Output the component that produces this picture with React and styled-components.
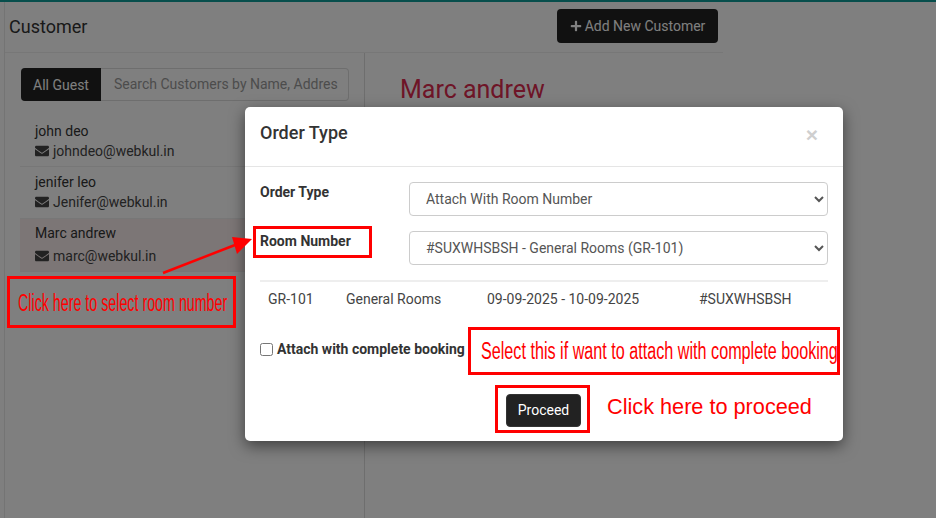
import styled, { createGlobalStyle } from 'styled-components';
import { FaEnvelope, FaPlus } from 'react-icons/fa';

const GlobalStyle = createGlobalStyle`
  html, body {
    margin: 0;
    height: 100%;
    overflow: hidden;
    background: #fff;
  }
  body, select, input, button {
    font-family: Roboto, "Liberation Sans", sans-serif;
  }
  * {
    box-sizing: border-box;
  }
`;

const Page = styled.div`
  position: relative;
  width: 936px;
  height: 518px;
  overflow: hidden;
`;

const TopLine = styled.div`
  height: 2px;
  background: #0f9c98;
`;

const Content = styled.div`
  width: 719px;
  height: 516px;
  margin-left: 4px;
  border-left: 1px solid #e8e8e8;
  display: flex;
  flex-direction: column;
`;

const TopBar = styled.header`
  height: 51px;
  flex-shrink: 0;
  border-bottom: 1px solid #eee;
  display: flex;
  align-items: center;
  justify-content: space-between;
  padding: 0 5px 0 4px;
`;

const PageTitle = styled.h1`
  margin: 0 0 2px;
  font-size: 18px;
  font-weight: 400;
  color: #333;
`;

const AddButton = styled.button`
  width: 161px;
  height: 34px;
  margin-bottom: 2px;
  border: 0;
  border-radius: 4px;
  background: #222;
  color: #fff;
  font-size: 14px;
  display: flex;
  align-items: center;
  justify-content: center;
  gap: 3px;
  padding: 0;
`;

const Columns = styled.div`
  flex: 1;
  display: flex;
  min-height: 0;
`;

const Sidebar = styled.aside`
  width: 360px;
  border-right: 1px solid #ddd;
  padding: 15px 15px 0 15px;
`;

const SearchGroup = styled.div`
  display: flex;
  height: 33px;
  margin: 0 0 16px 1px;
  border: 1px solid #ddd;
  border-left: 0;
  border-radius: 4px;
`;

const GuestButton = styled.button`
  width: 80px;
  border: 0;
  border-radius: 4px 0 0 4px;
  background: #222;
  color: #fff;
  font-size: 14px;
  padding: 0;
  margin: -1px 0;
`;

const SearchInput = styled.input`
  flex: 1;
  min-width: 0;
  border: 0;
  background: transparent;
  padding: 0 10px 2px 13px;
  font-size: 14px;
  &::placeholder {
    color: #999;
    opacity: 1;
  }
`;

const GuestRow = styled.div`
  height: ${(p) => p.$height}px;
  padding: ${(p) => p.$top}px 0 0 15px;
  border-bottom: 1px solid #eee;
  font-size: 14px;
  line-height: 20px;
  color: #333;
  background: ${(p) => (p.$active ? '#f9eded' : 'transparent')};
`;

const GuestName = styled.div``;

const GuestMail = styled.div`
  display: flex;
  align-items: center;
  gap: 4px;
  margin-top: ${(p) => p.$gap || 0}px;
  color: #444;
  svg {
    font-size: 14px;
  }
`;

const Detail = styled.main`
  flex: 1;
  padding: 20px 35px;
`;

const DetailName = styled.h2`
  margin: 0;
  font-size: 25px;
  font-weight: 400;
  line-height: 34px;
  color: #dc2a4e;
`;

const Overlay = styled.div`
  position: absolute;
  inset: 0;
  background: rgba(0, 0, 0, 0.5);
`;

const Modal = styled.section`
  position: absolute;
  left: 245px;
  top: 107px;
  width: 598px;
  height: 334px;
  background: #fff;
  border-radius: 5px;
  box-shadow: 0 5px 15px rgba(0, 0, 0, 0.5);
  display: flex;
  flex-direction: column;
`;

const ModalHeader = styled.header`
  height: 60px;
  flex-shrink: 0;
  border-bottom: 1px solid #e5e5e5;
  display: flex;
  justify-content: space-between;
  padding: 14px 25px 0 15px;
`;

const ModalTitle = styled.h3`
  margin: 0;
  font-size: 18px;
  font-weight: 500;
  line-height: 23px;
  color: #333;
`;

const CloseMark = styled.span`
  font-family: "Liberation Sans", sans-serif;
  font-size: 21px;
  font-weight: 700;
  line-height: 28px;
  color: #cfcfcf;
`;

const ModalBody = styled.div`
  flex: 1;
  padding: 15px 15px 0;
  display: flex;
  flex-direction: column;
`;

const FormRow = styled.div`
  display: flex;
  height: 34px;
  margin-bottom: 15px;
`;

const FieldLabel = styled.label`
  width: 149px;
  flex-shrink: 0;
  font-size: 14px;
  font-weight: 700;
  line-height: 20px;
  color: #333;
`;

const FieldSelect = styled.select`
  flex: 1;
  height: 34px;
  padding: 0 12px;
  border: 1px solid #ccc;
  border-radius: 4px;
  background: #fff;
  color: #555;
  font-size: 14px;
`;

const BookingRow = styled.div`
  display: grid;
  grid-template-columns: 78px 141px 212px 1fr;
  height: 45px;
  padding: 7px 8px 0;
  border-top: 2px solid #eee;
  font-size: 14px;
  line-height: 20px;
  color: #444;
`;

const CompleteLabel = styled.label`
  display: flex;
  align-items: center;
  gap: 4px;
  margin-top: 14px;
  height: 20px;
  font-size: 14px;
  font-weight: 700;
  color: #333;
  input {
    width: 13px;
    height: 13px;
    margin: 0;
  }
`;

const ProceedWrap = styled.div`
  margin: 35px 0 0 246px;
`;

const ProceedButton = styled.button`
  width: 75px;
  height: 33px;
  border: 1px solid #333;
  border-radius: 4px;
  background: #222;
  color: #fff;
  font-size: 14px;
  padding: 0 0 1px;
`;

const Callout = styled.div`
  position: absolute;
  border: 3px solid #f00;
  color: #f00;
  font-family: "Liberation Sans", sans-serif;
  white-space: nowrap;
`;

const RoomCallout = styled(Callout)`
  left: 253px;
  top: 226px;
  width: 119px;
  height: 32px;
`;

const SelectCallout = styled(Callout)`
  left: 7px;
  top: 276px;
  width: 229px;
  height: 52px;
`;

const AttachCallout = styled(Callout)`
  left: 468px;
  top: 327px;
  width: 372px;
  height: 48px;
`;

const ProceedCallout = styled(Callout)`
  left: 495px;
  top: 385px;
  width: 95px;
  height: 48px;
`;

const NarrowText = styled.span`
  position: absolute;
  left: ${(p) => p.$left}px;
  top: ${(p) => p.$top}px;
  font-size: ${(p) => p.$size}px;
  line-height: 24px;
  transform: scaleX(${(p) => p.$scale});
  transform-origin: left center;
`;

const ProceedHint = styled.span`
  position: absolute;
  left: 607px;
  top: 394px;
  font-family: "Liberation Sans", sans-serif;
  font-size: 21.7px;
  line-height: 26px;
  color: #f00;
  white-space: nowrap;
`;

const ArrowMark = styled.svg`
  position: absolute;
  left: 150px;
  top: 225px;
`;

export default function App() {
  return (
    <Page>
      <GlobalStyle />
      <TopLine />
      <Content>
        <TopBar>
          <PageTitle>Customer</PageTitle>
          <AddButton>
            <FaPlus size={12} />
            Add New Customer
          </AddButton>
        </TopBar>
        <Columns>
          <Sidebar>
            <SearchGroup>
              <GuestButton>All Guest</GuestButton>
              <SearchInput placeholder='Search Customers by Name, Address, Email' />
            </SearchGroup>
            <GuestRow
              $height={50}
              $top={4}>
              <GuestName>john deo</GuestName>
              <GuestMail>
                <FaEnvelope />
                johndeo@webkul.in
              </GuestMail>
            </GuestRow>
            <GuestRow
              $height={52}
              $top={5}>
              <GuestName>jenifer leo</GuestName>
              <GuestMail>
                <FaEnvelope />
                Jenifer@webkul.in
              </GuestMail>
            </GuestRow>
            <GuestRow
              $height={53}
              $top={4}
              $active>
              <GuestName>Marc andrew</GuestName>
              <GuestMail $gap={3}>
                <FaEnvelope />
                marc@webkul.in
              </GuestMail>
            </GuestRow>
          </Sidebar>
          <Detail>
            <DetailName>Marc andrew</DetailName>
          </Detail>
        </Columns>
      </Content>

      <Overlay />

      <Modal>
        <ModalHeader>
          <ModalTitle>Order Type</ModalTitle>
          <CloseMark>×</CloseMark>
        </ModalHeader>
        <ModalBody>
          <FormRow>
            <FieldLabel>Order Type</FieldLabel>
            <FieldSelect defaultValue='room'>
              <option value='room'>Attach With Room Number</option>
            </FieldSelect>
          </FormRow>
          <FormRow>
            <FieldLabel>Room Number</FieldLabel>
            <FieldSelect defaultValue='gr101'>
              <option value='gr101'>#SUXWHSBSH - General Rooms (GR-101)</option>
            </FieldSelect>
          </FormRow>
          <BookingRow>
            <span>GR-101</span>
            <span>General Rooms</span>
            <span>09-09-2025 - 10-09-2025</span>
            <span>#SUXWHSBSH</span>
          </BookingRow>
          <CompleteLabel>
            <input type='checkbox' />
            Attach with complete booking
          </CompleteLabel>
          <ProceedWrap>
            <ProceedButton>Proceed</ProceedButton>
          </ProceedWrap>
        </ModalBody>
      </Modal>

      <RoomCallout />
      <SelectCallout>
        <NarrowText
          $left={8}
          $top={12}
          $size={23}
          $scale={0.62}>
          Click here to select room number
        </NarrowText>
      </SelectCallout>
      <AttachCallout>
        <NarrowText
          $left={10}
          $top={9}
          $size={23}
          $scale={0.703}>
          Select this if want to attach with complete booking
        </NarrowText>
      </AttachCallout>
      <ProceedCallout />
      <ProceedHint>Click here to proceed</ProceedHint>
      <ArrowMark
        width='105'
        height='55'
        viewBox='0 0 105 55'>
        <line
          x1='13'
          y1='48'
          x2='85'
          y2='20'
          stroke='#f00'
          strokeWidth='2.5'
        />
        <polygon
          points='102,14 82,12 87,29'
          fill='#f00'
        />
      </ArrowMark>
    </Page>
  );
}
